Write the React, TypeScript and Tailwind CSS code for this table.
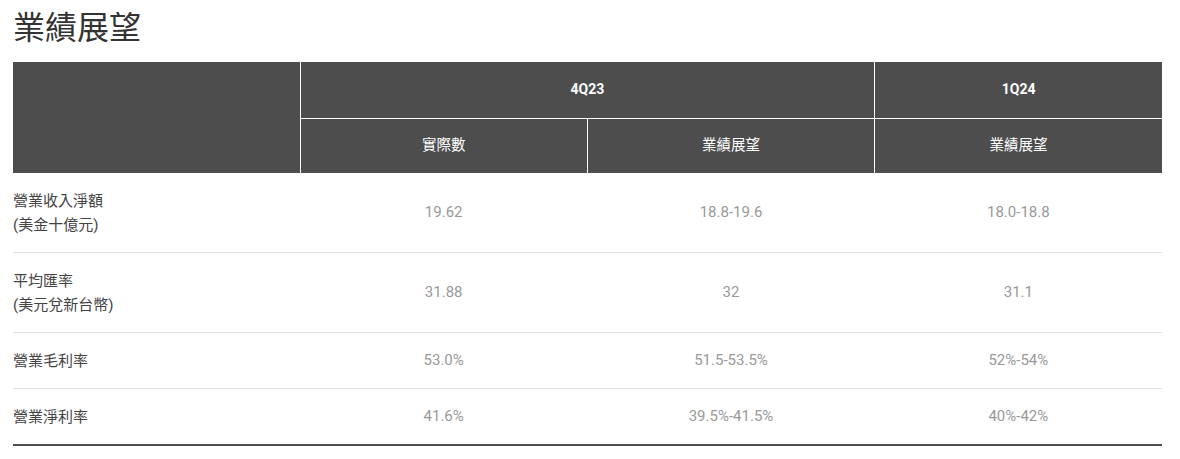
const font = { fontFamily: "Roboto, 'Noto Sans CJK TC', sans-serif" };

const rows = [
  { label: ['營業收入淨額', '(美金十億元)'], values: ['19.62', '18.8-19.6', '18.0-18.8'] },
  { label: ['平均匯率', '(美元兌新台幣)'], values: ['31.88', '32', '31.1'] },
  { label: ['營業毛利率'], values: ['53.0%', '51.5-53.5%', '52%-54%'] },
  { label: ['營業淨利率'], values: ['41.6%', '39.5%-41.5%', '40%-42%'] },
];

export default function App() {
  return (
    <div className="bg-white w-[1180px] h-[459px] pl-[13px]" style={font}>
      <h1 className="pt-[8px] text-[32px] leading-[40px] text-[#333333] font-normal">業績展望</h1>
      <table className="mt-[14px] w-[1149px] border-collapse table-fixed">
        <thead>
          <tr className="bg-[#4d4d4d] text-white">
            <th rowSpan={2} className="w-[287px] border-r border-white"></th>
            <th colSpan={2} className="h-[56px] text-[14px] font-bold border-r border-b border-white">4Q23</th>
            <th className="h-[56px] text-[14px] font-bold border-b border-white">1Q24</th>
          </tr>
          <tr className="bg-[#4d4d4d] text-white">
            <th className="h-[55px] w-[287px] text-[14.5px] font-normal border-r border-white">實際數</th>
            <th className="h-[55px] w-[287px] text-[14.5px] font-normal border-r border-white">業績展望</th>
            <th className="h-[55px] w-[287px] text-[14.5px] font-normal">業績展望</th>
          </tr>
        </thead>
        <tbody>
          {rows.map((r, i) => (
            <tr
              key={i}
              className={i === rows.length - 1 ? 'border-b-2 border-[#4d4d4d]' : 'border-b border-[#e3e3e3]'}
            >
              <td className="pt-[16px] pb-[15px] text-[15px] leading-[24px] text-[#444444] align-middle">
                {r.label.map((l) => (
                  <div key={l}>{l}</div>
                ))}
              </td>
              {r.values.map((v, j) => (
                <td key={j} className="text-center text-[15px] text-[#999999] align-middle">
                  {v}
                </td>
              ))}
            </tr>
          ))}
        </tbody>
      </table>
    </div>
  );
}
